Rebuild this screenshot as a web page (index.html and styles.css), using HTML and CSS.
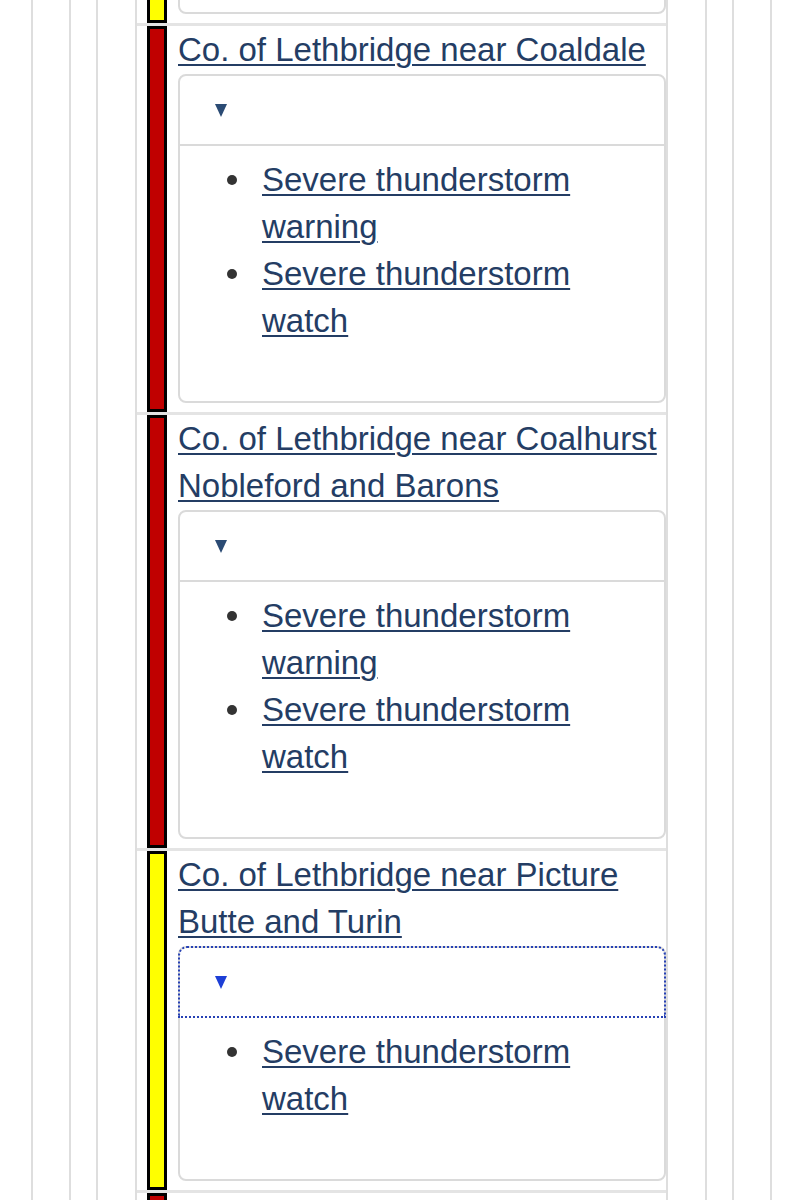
FILE: index.html
```html
<!DOCTYPE html>
<html lang="en">
<head>
<meta charset="utf-8">
<title>Alerts</title>
<link rel="stylesheet" href="styles.css">
</head>
<body>
<div class="b1"><div class="b2"><div class="b3"><div class="b4">
  <div class="scroll">
    <div class="row">
      <div class="bar yellow"></div>
      <div class="main">
        <a class="title" href="#">Co. of Lethbridge near Lethbridge</a>
        <details class="card" open>
          <summary><svg class="tri" viewBox="0 0 12 13"><polygon points="0,0 12,0 6,13"/></svg></summary>
          <ul class="alerts">
            <li><a href="#">Severe thunderstorm watch</a></li>
          </ul>
        </details>
      </div>
    </div>

    <div class="row">
      <div class="bar red"></div>
      <div class="main">
        <a class="title" href="#">Co. of Lethbridge near Coaldale</a>
        <details class="card" open>
          <summary><svg class="tri" viewBox="0 0 12 13"><polygon points="0,0 12,0 6,13"/></svg></summary>
          <ul class="alerts">
            <li><a href="#">Severe thunderstorm warning</a></li>
            <li><a href="#">Severe thunderstorm watch</a></li>
          </ul>
        </details>
      </div>
    </div>

    <div class="row">
      <div class="bar red"></div>
      <div class="main">
        <a class="title" href="#">Co. of Lethbridge near Coalhurst Nobleford and Barons</a>
        <details class="card" open>
          <summary><svg class="tri" viewBox="0 0 12 13"><polygon points="0,0 12,0 6,13"/></svg></summary>
          <ul class="alerts">
            <li><a href="#">Severe thunderstorm warning</a></li>
            <li><a href="#">Severe thunderstorm watch</a></li>
          </ul>
        </details>
      </div>
    </div>

    <div class="row">
      <div class="bar yellow"></div>
      <div class="main">
        <a class="title" href="#">Co. of Lethbridge near Picture Butte and Turin</a>
        <details class="card focused" open>
          <summary><svg class="tri" viewBox="0 0 12 13"><polygon points="0,0 12,0 6,13"/></svg></summary>
          <ul class="alerts">
            <li><a href="#">Severe thunderstorm watch</a></li>
          </ul>
        </details>
      </div>
    </div>

    <div class="row">
      <div class="bar red"></div>
      <div class="main">
        <a class="title" href="#">Co. of Lethbridge near Raymond</a>
        <details class="card" open>
          <summary><svg class="tri" viewBox="0 0 12 13"><polygon points="0,0 12,0 6,13"/></svg></summary>
          <ul class="alerts">
            <li><a href="#">Severe thunderstorm warning</a></li>
          </ul>
        </details>
      </div>
    </div>
  </div>
</div></div></div></div>
</body>
</html>
```

FILE: styles.css
```css
html, body {
  margin: 0;
  padding: 0;
  background: #ffffff;
}

body {
  font-family: "Liberation Sans", Arial, Helvetica, sans-serif;
  font-size: 33px;
  line-height: 47px;
  color: #333333;
  overflow: hidden;
  height: 1200px;
}

.b1,
.b2,
.b3,
.b4 {
  border-left: 2px solid #dedede;
  border-right: 2px solid #dedede;
}

.b1 { margin: 0 31px; }
.b2 { margin: 0 36px; }
.b3 { margin: 0 25px; }
.b4 { margin: 0 37px; }

.scroll {
  margin-top: -319px;
}

.row {
  display: flex;
  border-top: 3px solid #e4e4e4;
}

.bar {
  flex: 0 0 auto;
  width: 14px;
  margin-left: 10px;
  margin-right: 11px;
  border: 3px solid #000000;
}

.bar.red { background: #c00000; }
.bar.yellow { background: #ffff00; }

.main {
  flex: 1 1 auto;
  min-width: 0;
  padding-bottom: 9px;
}

a {
  color: #243d64;
  text-decoration: underline;
  text-decoration-thickness: 2px;
  text-underline-offset: 3px;
}

.title {
  display: block;
}

.card {
  margin-top: 1px;
  border: 2px solid #dadada;
  border-radius: 8px;
}

.card summary {
  display: flex;
  align-items: center;
  height: 68px;
  padding-left: 35px;
  border-bottom: 2px solid #dadada;
  list-style: none;
  border-radius: 7px 7px 0 0;
  cursor: pointer;
}

.card summary::-webkit-details-marker {
  display: none;
}

.tri {
  width: 12px;
  height: 13px;
  fill: #2b4b74;
}

.card.focused summary {
  border-bottom: 0;
  margin-bottom: 2px;
  outline: 2px dotted #2641b5;
  outline-offset: 0;
}

.card.focused .tri {
  fill: #1d3fd6;
}

.alerts {
  margin: 0;
  padding: 10px 0 57px 82px;
  list-style: none;
}

.alerts li {
  display: grid;
  grid-template-columns: 10px 1fr;
  column-gap: 25px;
  margin-left: -35px;
}

.alerts li::before {
  content: "";
  width: 10px;
  height: 10px;
  margin-top: 19px;
  border-radius: 50%;
  background: #333333;
}
```
